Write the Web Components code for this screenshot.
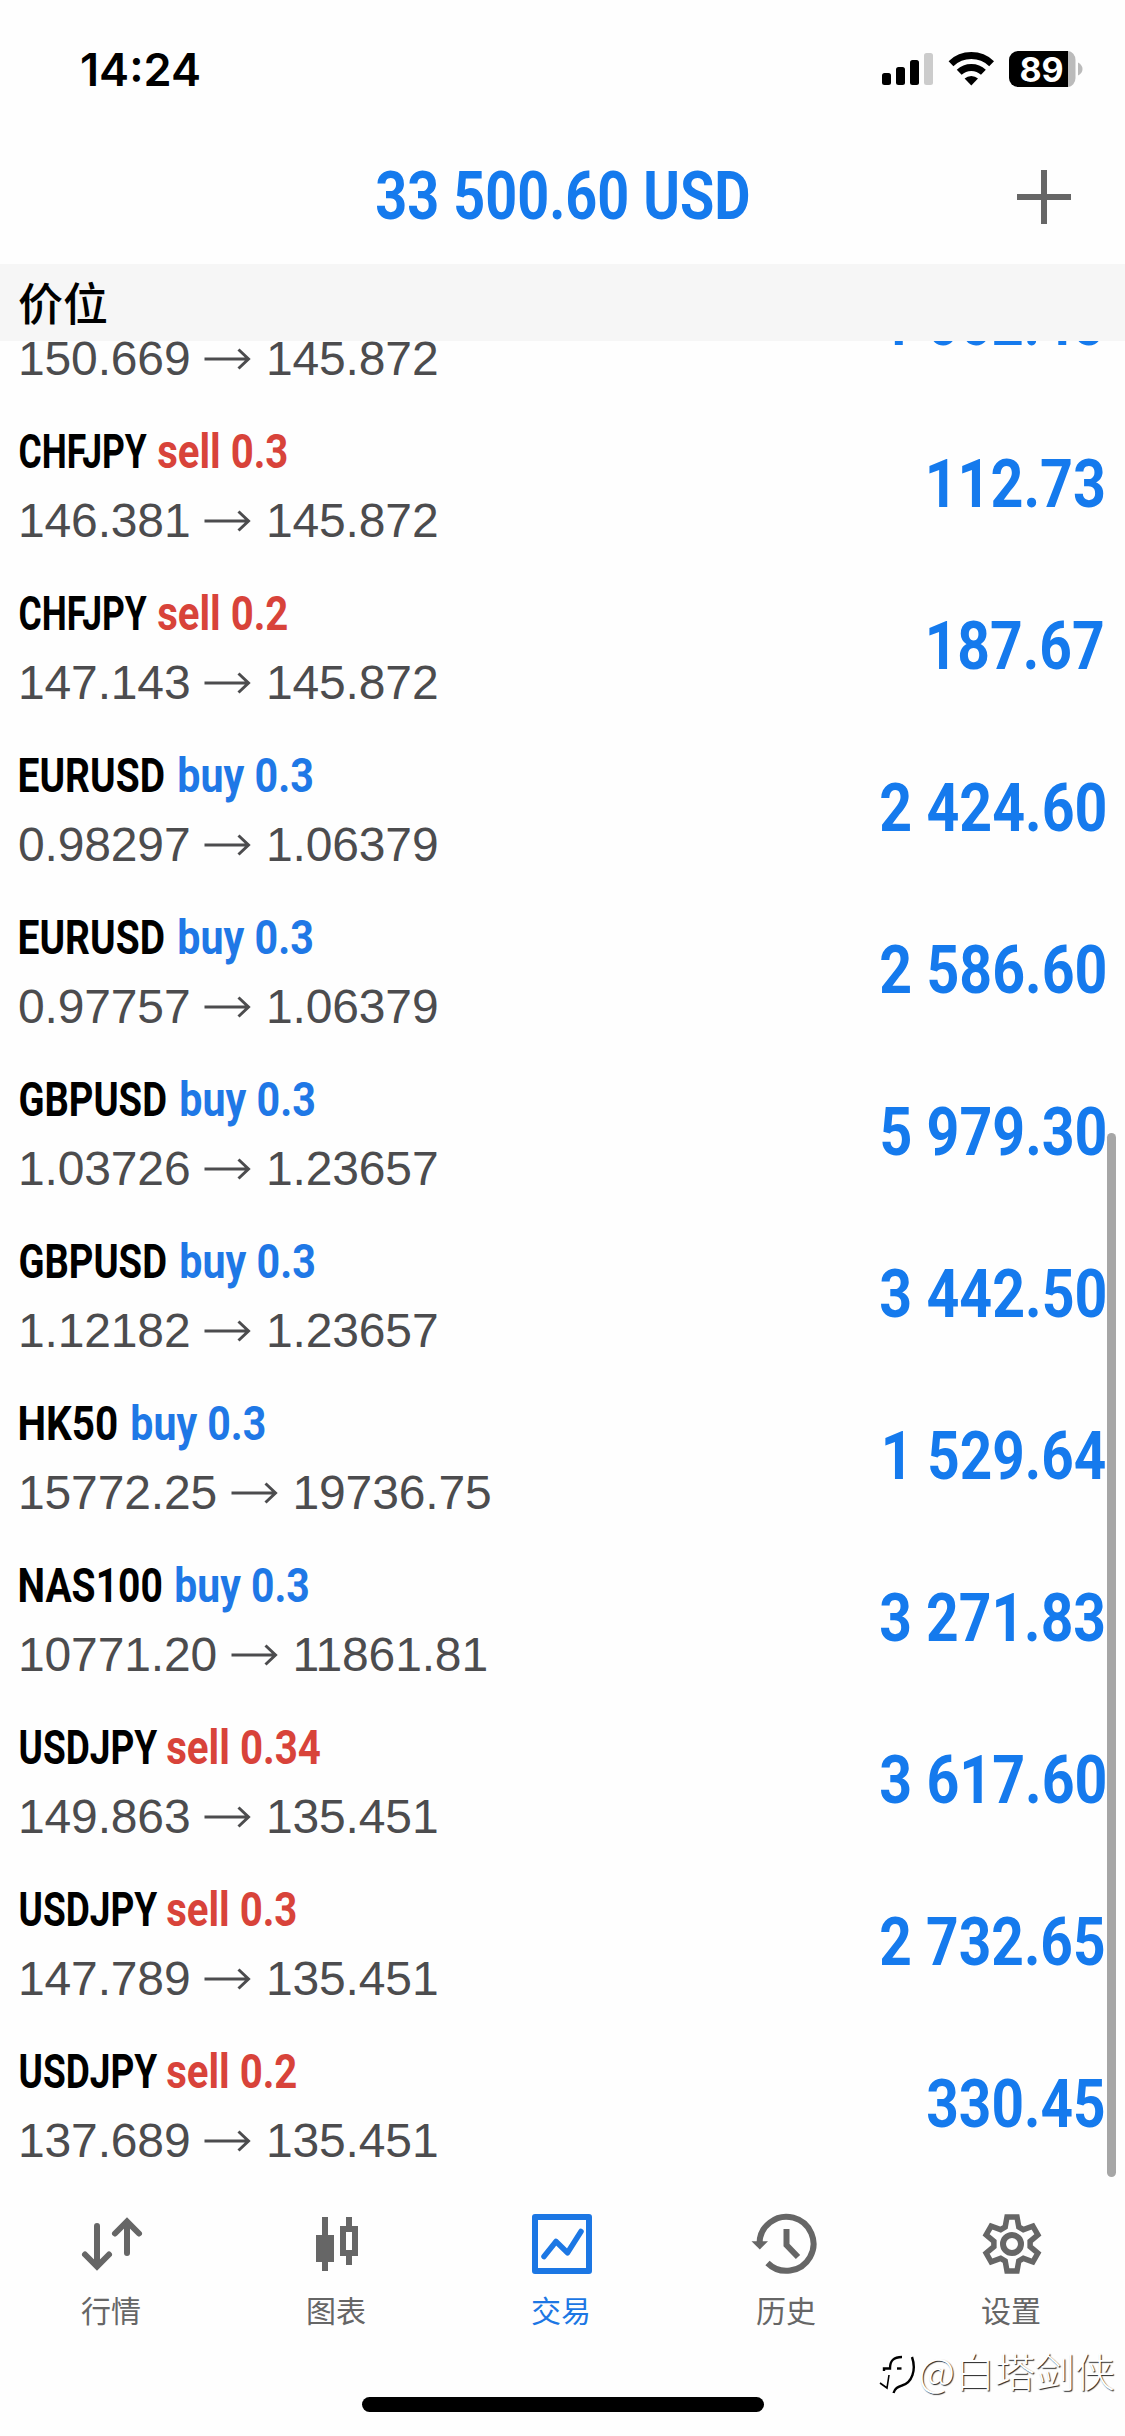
<!DOCTYPE html>
<html lang="zh-CN">
<head>
<meta charset="utf-8">
<title>交易</title>
<style>
  html, body { margin: 0; padding: 0; background: #fefefe; }
</style>
</head>
<body>
<trade-app></trade-app>
<script>
const measurer = document.createElement('canvas').getContext('2d');

/* A line of text whose ink is condensed or widened to an exact width. */
class FitText extends HTMLElement {
  connectedCallback() {
    const w = +this.getAttribute('width');
    this.attachShadow({ mode: 'open' }).innerHTML = `
      <style>
        :host { display: block; flex: none; width: ${w}px; height: 1em; }
        span { display: block; width: max-content; line-height: 1; white-space: pre; transform-origin: 0 50%; }
      </style><span><slot></slot></span>`;
    const cs = getComputedStyle(this);
    measurer.font = `${cs.fontWeight} ${cs.fontSize} ${cs.fontFamily}`;
    const m = measurer.measureText(this.textContent);
    const left = m.actualBoundingBoxLeft, right = m.actualBoundingBoxRight;
    this.shadowRoot.querySelector('span').style.transform =
      `scaleX(${w / (left + right)}) translateX(${left}px)`;
  }
}
customElements.define('fit-text', FitText);

class StatusBar extends HTMLElement {
  constructor() {
    super();
    this.attachShadow({ mode: 'open' }).innerHTML = `
      <style>
        :host { display: flex; justify-content: space-between; align-items: center; box-sizing: border-box;
                height: 138px; padding: 0 42px 0 82px; font-family: Inter, "Liberation Sans", sans-serif; color: #000; }
        fit-text { font-size: 45px; font-weight: 600; }
        svg { display: block; overflow: visible; }
      </style>
      <fit-text width="117">14:24</fit-text>
      <svg width="201" height="36" viewBox="882 51 201 36">
        <rect x="882" y="73" width="9" height="12" rx="2.5"/>
        <rect x="896" y="67" width="9" height="18" rx="2.5"/>
        <rect x="910" y="60" width="9" height="25" rx="2.5"/>
        <rect x="924" y="53" width="9" height="32" rx="2.5" fill="#ccc"/>
        <g fill="none" stroke="#000" stroke-width="7">
          <path d="M951 63.7a29.5 29.5 0 0 1 40.6 0"/>
          <path d="M959.2 72.3a17.5 17.5 0 0 1 24.2 0"/>
        </g>
        <path d="M964.6 78.6a9.7 9.7 0 0 1 13.4 0L971.3 85.5z"/>
        <path d="M1018 51H1068V87H1018a9 9 0 0 1-9-9V60a9 9 0 0 1 9-9z"/>
        <path d="M1068 51a7.5 9 0 0 1 7.5 9V78a7.5 9 0 0 1-7.5 9z" fill="#bbb"/>
        <path d="M1078 62.5q4.5 2.5 4.5 6.5t-4.5 6.5z" fill="#bbb"/>
        <text x="1041.5" y="81.500" text-anchor="middle" font-size="34" font-weight="700" fill="#fff">89</text>
      </svg>`;
  }
}
customElements.define('status-bar', StatusBar);

class BalanceHeader extends HTMLElement {
  connectedCallback() {
    this.attachShadow({ mode: 'open' }).innerHTML = `
      <style>
        :host { display: grid; grid-template-columns: 1fr auto 1fr; align-items: center; height: 126px;
                font: 700 66px Roboto, sans-serif; color: #157aed; }
        fit-text { grid-column: 2; margin-top: -8px; }
        svg { justify-self: end; margin: -8px 54px 0 0; }
      </style>
      <fit-text width="372">${this.getAttribute('total')}</fit-text>
      <svg width="54" height="54" viewBox="0 0 54 54"><path d="M0 27H54M27 0V54" stroke="#666" stroke-width="6"/></svg>`;
  }
}
customElements.define('balance-header', BalanceHeader);

class SectionBar extends HTMLElement {
  constructor() {
    super();
    this.attachShadow({ mode: 'open' }).innerHTML = `
      <style>
        :host { display: flex; align-items: center; box-sizing: border-box; height: 77px; padding: 0 0 3px 18px;
                background: #f6f6f6; color: #000; font: 500 45px/1 "Noto Sans CJK SC", sans-serif; }
      </style><slot></slot>`;
  }
}
customElements.define('section-bar', SectionBar);

/* One open position: symbol and volume over the price move, profit at the right. */
class PositionRow extends HTMLElement {
  connectedCallback() {
    const a = n => this.getAttribute(n);
    const num = n => +a(n);
    const symbol = a('symbol');
    const color = a('side').startsWith('sell') ? '#d8433a' : '#1f78e6';
    this.attachShadow({ mode: 'open' }).innerHTML = `
      <style>
        :host { display: flex; justify-content: space-between; box-sizing: border-box; height: 162px; flex: none;
                padding-right: ${1125 - num('pr')}px; }
        .info { display: flex; flex-direction: column; padding: 13px 0 0 18px; }
        .name { display: flex; height: 48px; padding-left: 2px; font: 700 48px Roboto, sans-serif; color: #000; }
        .side { color: ${color}; margin-left: ${num('sl') - num('nr')}px; }
        .move { display: flex; align-items: center; height: 48px; margin-top: 21px; color: #4c4c4e;
                font: 48px/48px "Liberation Sans", Arial, sans-serif; letter-spacing: -.15px; white-space: pre; }
        .move svg { margin: 0 14px 0 13.5px; }
        .profit { font: 700 66px Roboto, sans-serif; color: #157aed; margin-top: 36.5px; }
      </style>
      <div class="info">
        <div class="name">${symbol ? `<fit-text width="${num('nr') - 20}">${symbol}</fit-text><fit-text class="side" width="${num('sr') - num('sl')}">${a('side')}</fit-text>` : ''}</div>
        <div class="move"><span>${a('from')}</span><svg width="48" height="24" viewBox="0 0 48 24" fill="none" stroke="#4c4c4e" stroke-width="3"><path d="M0.5 12H45M34.500 2.500L44.500 12L34.500 21.500"/></svg><span>${a('to')}</span></div>
      </div>
      <fit-text class="profit" width="${num('pr') - num('pl')}">${a('profit')}</fit-text>`;
  }
}
customElements.define('position-row', PositionRow);

class PositionList extends HTMLElement {
  constructor() {
    super();
    this.attachShadow({ mode: 'open' }).innerHTML = `
      <style>
        :host { display: block; position: relative; height: 1846px; overflow: hidden; }
        .rows { display: flex; flex-direction: column; margin-top: -88px; }
        .bar { position: absolute; right: 9px; top: 792px; width: 9px; height: 1044px; border-radius: 5px; background: #a6a6a6; }
      </style>
      <div class="rows"><slot></slot></div><div class="bar"></div>`;
  }
}
customElements.define('position-list', PositionList);

const tooth = [[-6.8, -17], [-5, -27], [5, -27], [6.8, -17]];
const gear = [0, 1, 2, 3, 4, 5].flatMap(k => {
  const t = k * Math.PI / 3, c = Math.cos(t), s = Math.sin(t);
  return tooth.map(([x, y]) => `${(36 + x * c - y * s).toFixed(2)} ${(36 + x * s + y * c).toFixed(2)}`);
});
const ICONS = {
  quotes: '<g stroke-linecap="round"><path d="M21 18V57M9 46.500L21 58.500L33 46.500M51 45V15M39 25.500L51 13.500L63 25.500"/></g>',
  chart: '<path d="M24 9V63M48 9V18M48 48V57"/><rect x="18" y="30" width="12" height="21" fill="currentColor"/><rect x="42" y="21" width="12" height="24"/>',
  trade: '<rect x="9" y="9" width="54" height="54" stroke-linejoin="round"/><path d="M18 48.500L30 33.500L41.500 44.800L55 23.500" stroke-width="5.500" stroke-linecap="round" stroke-linejoin="round"/>',
  history: '<path d="M8.500 38V36A27 27 0 1 1 16.500 55"/><path d="M0.500 33.300H17L8.800 41.500z" fill="currentColor" stroke="none"/><path d="M35.500 21V37L47 49"/>',
  settings: `<path d="M${gear.join('L')}z" stroke-width="5.500"/><circle cx="36" cy="36" r="9"/>`
};

class TabItem extends HTMLElement {
  connectedCallback() {
    this.attachShadow({ mode: 'open' }).innerHTML = `
      <style>
        :host { display: flex; flex-direction: column; align-items: center; flex: 1; box-sizing: border-box;
                padding: 21px 1px 0 0; color: #666; font: 400 30px/36px "Noto Sans CJK SC", sans-serif; }
        :host([active]) { color: #1c77e4; }
        svg { display: block; margin-bottom: 11px; }
        .label { padding-right: 2px; }
      </style>
      <svg width="72" height="72" viewBox="0 0 72 72" fill="none" stroke="currentColor" stroke-width="6">${ICONS[this.getAttribute('icon')]}</svg>
      <div class="label"><slot></slot></div>`;
  }
}
customElements.define('tab-item', TabItem);

class TabBar extends HTMLElement {
  constructor() {
    super();
    this.attachShadow({ mode: 'open' }).innerHTML = `
      <style>
        :host { display: flex; flex-direction: column; align-items: center; height: 249px; }
        .tabs { display: flex; width: 100%; height: 210px; }
        .home { width: 402px; height: 15px; border-radius: 8px; background: #000; }
      </style>
      <div class="tabs"><slot></slot></div><div class="home"></div>`;
  }
}
customElements.define('tab-bar', TabBar);

/* Author mark over the bottom right corner. */
class AuthorMark extends HTMLElement {
  constructor() {
    super();
    this.attachShadow({ mode: 'open' }).innerHTML = `
      <style>
        :host { position: absolute; right: 10px; top: 2348px; display: flex; align-items: center; height: 44px;
                font: 300 40px/44px "Noto Sans CJK SC", sans-serif; color: #fff; white-space: nowrap;
                text-shadow: 1px 1px 1px #222; }
        svg { margin: 8px 3px 0 0; }
      </style>
      <svg width="38" height="46" viewBox="0 0 38 46" fill="none" stroke="#000" stroke-width="2.400">
        <path d="M6 20V17.500H12C12 10 15 6 24 6"/><path d="M19 17.500H23.500"/>
        <path d="M34 6C38.500 19 34 32 24 34.500C20 36 17 37 15.500 42"/><path d="M11 24L9 37L2 32" stroke-width="1.600"/>
      </svg><slot></slot>`;
  }
}
customElements.define('author-mark', AuthorMark);

/* symbol, side, from, to, profit, symbol right edge, side left and right edges, profit left and right edges */
const POSITIONS = [
  ['', '', '150.669', '145.872', '1 062.45', 0, 0, 0, 885, 1103],
  ['CHFJPY', 'sell 0.3', '146.381', '145.872', '112.73', 147, 158, 287, 929, 1103.5],
  ['CHFJPY', 'sell 0.2', '147.143', '145.872', '187.67', 147, 158, 287, 929, 1103],
  ['EURUSD', 'buy 0.3', '0.98297', '1.06379', '2 424.60', 164, 178.5, 312, 881, 1105],
  ['EURUSD', 'buy 0.3', '0.97757', '1.06379', '2 586.60', 164, 178.5, 312, 881, 1105],
  ['GBPUSD', 'buy 0.3', '1.03726', '1.23657', '5 979.30', 166, 180.5, 314, 882, 1105],
  ['GBPUSD', 'buy 0.3', '1.12182', '1.23657', '3 442.50', 166, 180.5, 314, 881, 1105],
  ['HK50', 'buy 0.3', '15772.25', '19736.75', '1 529.64', 117, 132, 265, 885, 1105.5],
  ['NAS100', 'buy 0.3', '10771.20', '11861.81', '3 271.83', 161.5, 176, 308.5, 881, 1103.5],
  ['USDJPY', 'sell 0.34', '149.863', '135.451', '3 617.60', 157.5, 167, 320.5, 881, 1105],
  ['USDJPY', 'sell 0.3', '147.789', '135.451', '2 732.65', 157.5, 167, 296, 881, 1104],
  ['USDJPY', 'sell 0.2', '137.689', '135.451', '330.45', 157.5, 167, 296, 928, 1104]
];
const KEYS = ['symbol', 'side', 'from', 'to', 'profit', 'nr', 'sl', 'sr', 'pl', 'pr'];

class TradeApp extends HTMLElement {
  connectedCallback() {
    const rows = POSITIONS.map(p => `<position-row ${KEYS.map((k, i) => `${k}="${p[i]}"`).join(' ')}></position-row>`).join('');
    this.attachShadow({ mode: 'open' }).innerHTML = `
      <style>
        :host { display: flex; flex-direction: column; position: relative; width: 1125px; height: 2436px;
                overflow: hidden; background: #fefefe; }
      </style>
      <status-bar></status-bar>
      <balance-header total="33 500.60 USD"></balance-header>
      <section-bar>价位</section-bar>
      <position-list>${rows}</position-list>
      <tab-bar>
        <tab-item icon="quotes">行情</tab-item>
        <tab-item icon="chart">图表</tab-item>
        <tab-item icon="trade" active>交易</tab-item>
        <tab-item icon="history">历史</tab-item>
        <tab-item icon="settings">设置</tab-item>
      </tab-bar>
      <author-mark>@白塔剑侠</author-mark>`;
  }
}
customElements.define('trade-app', TradeApp);
</script>
</body>
</html>
